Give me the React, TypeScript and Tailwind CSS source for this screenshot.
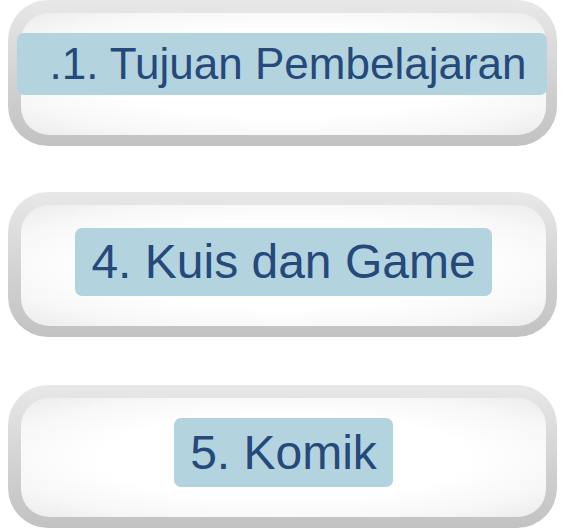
const items = [
  {
    text: '.1. Tujuan Pembelajaran',
    box: 'h-[146px]',
    label: 'w-[530px] shrink-0 h-[62px] pl-[33px] mb-[20px] -ml-[4px] text-[44px]',
  },
  {
    text: '4. Kuis dan Game',
    box: 'h-[145px] mt-[46px]',
    label: 'h-[68px] px-4 mb-[8px] text-[48px]',
  },
  {
    text: '5. Komik',
    box: 'h-[143px] mt-[48px]',
    label: 'h-[69px] px-4 mb-[10px] text-[48px]',
  },
]

function MenuButton({ text, box, label }: { text: string; box: string; label: string }) {
  return (
    <div
      className={`${box} rounded-[40px] bg-gradient-to-b from-[#e8e8e8] via-[#d4d4d4] to-[#c2c2c2] pt-[13px] pb-[11px] pl-[13px] pr-[11px] flex`}
    >
      <div className="flex-1 min-w-0 rounded-[28px] bg-[radial-gradient(ellipse_at_center,#ffffff_50%,#f7f7f7_78%,#ebebeb_100%)] flex items-center justify-center">
        <div
          className={`${label} rounded-[7px] bg-[#b3d3de] flex items-center text-[#25497a] leading-none whitespace-nowrap`}
          style={{ fontFamily: '"Liberation Sans", Arial, sans-serif' }}
        >
          {text}
        </div>
      </div>
    </div>
  )
}

export default function App() {
  return (
    <div className="w-[565px] h-[530px] bg-white px-2 flex flex-col overflow-hidden">
      {items.map((it) => (
        <MenuButton key={it.text} {...it} />
      ))}
    </div>
  )
}
